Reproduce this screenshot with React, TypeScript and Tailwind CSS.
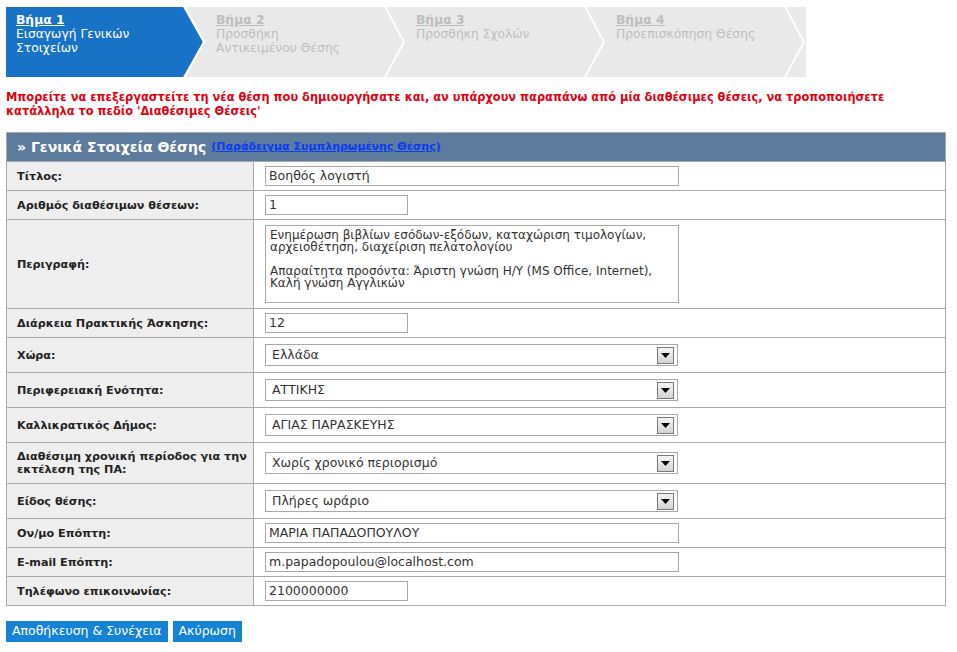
import React from "react";

const font = { fontFamily: '"DejaVu Sans", Verdana, sans-serif' };

const steps = [
  { n: "Βήμα 1", lines: ["Εισαγωγή Γενικών", "Στοιχείων"], active: true },
  { n: "Βήμα 2", lines: ["Προσθήκη", "Αντικειμένου Θέσης"], active: false },
  { n: "Βήμα 3", lines: ["Προσθήκη Σχολών"], active: false },
  { n: "Βήμα 4", lines: ["Προεπισκόπηση Θέσης"], active: false },
];

function StepsBar() {
  return (
    <div className="relative h-[70px] w-[800px]">
      <svg className="absolute inset-0" width="800" height="70" viewBox="0 0 800 70">
        <rect x="0" y="0" width="800" height="70" fill="#e9e9e9" />
        <polygon points="0,0 177,0 197,35 177,70 0,70" fill="#1872c6" />
        {[0, 1, 2, 3].map((k) => (
          <polyline
            key={k}
            points={`${178 + 200 * k},-2 ${198 + 200 * k},35 ${178 + 200 * k},72`}
            fill="none"
            stroke="#ffffff"
            strokeWidth="2"
          />
        ))}
      </svg>
      <div className="relative flex h-full">
        {steps.map((s) => (
          <div
            key={s.n}
            className={`w-[200px] pl-[10px] pt-[6px] text-[12.3px] leading-[14px] ${
              s.active ? "text-white" : "text-[#bdbdbd]"
            }`}
          >
            <div className="font-bold underline">{s.n}</div>
            {s.lines.map((l) => (
              <div key={l}>{l}</div>
            ))}
          </div>
        ))}
      </div>
    </div>
  );
}

function TextInput({ value, w = "w-[414px]" }: { value: string; w?: string }) {
  return (
    <div
      className={`${w} flex h-[20px] items-center border border-[#a9a9a9] bg-white pl-[3px] text-[12.5px] text-[#333]`}
    >
      {value}
    </div>
  );
}

function Select({ value }: { value: string }) {
  return (
    <div className="flex h-[22px] w-[413px] items-center justify-between border border-[#a9a9a9] bg-white pl-[6px] pr-[3px] text-[12.5px] text-[#333]">
      <span>{value}</span>
      <span className="flex h-[17px] w-[17px] items-center justify-center border border-[#7a7a7a] bg-gradient-to-b from-[#f4f4f4] to-[#d4d4d4]">
        <svg width="9" height="5" viewBox="0 0 9 5">
          <polygon points="0,0 9,0 4.5,5" fill="#000" />
        </svg>
      </span>
    </div>
  );
}

type Row = { label: React.ReactNode; h: string; field: React.ReactNode };

const rows: Row[] = [
  { label: "Τίτλος:", h: "h-[29px]", field: <TextInput value="Βοηθός λογιστή" /> },
  { label: "Αριθμός διαθέσιμων θέσεων:", h: "h-[29px]", field: <TextInput value="1" w="w-[143px]" /> },
  {
    label: "Περιγραφή:",
    h: "h-[89px]",
    field: (
      <div className="h-[78px] w-[414px] border border-[#a9a9a9] bg-white px-[4px] pt-[3px] text-[12px] leading-[12px] text-[#333]">
        <div>Ενημέρωση βιβλίων εσόδων-εξόδων, καταχώριση τιμολογίων,</div>
        <div>αρχειοθέτηση, διαχείριση πελατολογίου</div>
        <div className="mt-[12px]">Απαραίτητα προσόντα: Άριστη γνώση Η/Υ (MS Office, Internet),</div>
        <div>Καλή γνώση Αγγλικών</div>
      </div>
    ),
  },
  { label: "Διάρκεια Πρακτικής Άσκησης:", h: "h-[29px]", field: <TextInput value="12" w="w-[143px]" /> },
  { label: "Χώρα:", h: "h-[35px]", field: <Select value="Ελλάδα" /> },
  { label: "Περιφερειακή Ενότητα:", h: "h-[35px]", field: <Select value="ΑΤΤΙΚΗΣ" /> },
  { label: "Καλλικρατικός Δήμος:", h: "h-[35px]", field: <Select value="ΑΓΙΑΣ ΠΑΡΑΣΚΕΥΗΣ" /> },
  {
    label: (
      <>
        Διαθέσιμη χρονική περίοδος για την
        <br />
        εκτέλεση της ΠΑ:
      </>
    ),
    h: "h-[41px]",
    field: <Select value="Χωρίς χρονικό περιορισμό" />,
  },
  { label: "Είδος θέσης:", h: "h-[35px]", field: <Select value="Πλήρες ωράριο" /> },
  { label: "Ον/μο Επόπτη:", h: "h-[29px]", field: <TextInput value="ΜΑΡΙΑ ΠΑΠΑΔΟΠΟΥΛΟΥ" /> },
  { label: "E-mail Επόπτη:", h: "h-[29px]", field: <TextInput value="m.papadopoulou@localhost.com" /> },
  { label: "Τηλέφωνο επικοινωνίας:", h: "h-[29px]", field: <TextInput value="2100000000" w="w-[143px]" /> },
];

export default function App() {
  return (
    <div className="min-h-[652px] bg-white pl-[6px] pt-[7px]" style={font}>
      <StepsBar />

      <p className="mt-[13px] text-[11.4px] font-bold leading-[14px] text-[#e3000f]">
        Μπορείτε να επεξεργαστείτε τη νέα θέση που δημιουργήσατε και, αν υπάρχουν παραπάνω από μία διαθέσιμες θέσεις, να τροποποιήσετε
        <br />
        κατάλληλα το πεδίο 'Διαθέσιμες Θέσεις'
      </p>

      <div className="mt-[14px] w-[940px] border border-[#a9a9a9]">
        <div className="flex h-[28px] items-center bg-[#5d7b9c] pl-[10px]">
          <span className="text-[14px] font-bold text-white">» Γενικά Στοιχεία Θέσης</span>
          <a className="ml-[5px] text-[11px] font-bold text-[#0a3cf0] underline" href="#">
            (Παράδειγμα Συμπληρωμένης Θέσης)
          </a>
        </div>
        {rows.map((r, i) => (
          <div key={i} className={`flex ${r.h} border-t border-[#a9a9a9]`}>
            <div className="flex w-[247px] items-center border-r border-[#a9a9a9] bg-[#eeeeee] pl-[10px] text-[11.2px] font-bold leading-[13px] text-[#222]">
              <span>{r.label}</span>
            </div>
            <div className="flex flex-1 items-center pl-[11px]">{r.field}</div>
          </div>
        ))}
      </div>

      <div className="mt-[15px] flex gap-[5px]">
        <button className="h-[21px] bg-[#1682d4] px-[6px] text-[12.5px] text-white">Αποθήκευση &amp; Συνέχεια</button>
        <button className="h-[21px] bg-[#1682d4] px-[6px] text-[12.5px] text-white">Ακύρωση</button>
      </div>
    </div>
  );
}
